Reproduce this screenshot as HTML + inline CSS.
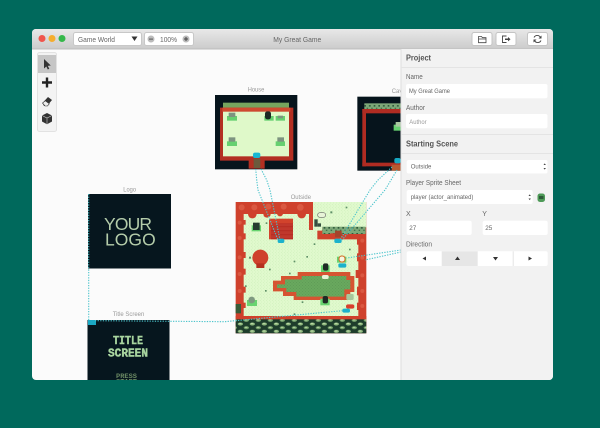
<!DOCTYPE html>
<html><head><meta charset="utf-8"><style>
html,body{margin:0;padding:0;width:600px;height:428px;overflow:hidden;background:#00695c}
svg{position:absolute;left:0;top:0;display:block;filter:blur(.3px)}
text{font-family:"Liberation Sans",sans-serif}
</style></head><body>
<svg width="600" height="428" viewBox="0 0 600 428">
<defs>
<linearGradient id="tb" x1="0" y1="0" x2="0" y2="1"><stop offset="0" stop-color="#e8e8e8"/><stop offset="1" stop-color="#cbcbcb"/></linearGradient>
<pattern id="st" width="9" height="9" patternUnits="userSpaceOnUse"><rect width="9" height="9" fill="#e0f9cd"/><rect x="1" y="2" width="2" height="2" fill="#c8ecb4"/><rect x="6" y="6" width="2" height="2" fill="#c8ecb4"/></pattern>
<pattern id="pd" width="9" height="9" patternUnits="userSpaceOnUse"><rect width="9" height="9" fill="#69a85e"/><rect x="2" y="2" width="2" height="2" fill="#528e4e"/><rect x="6" y="6" width="2" height="2" fill="#528e4e"/></pattern>
<pattern id="tr" width="36" height="22" patternUnits="userSpaceOnUse"><rect width="36" height="22" fill="#1e3d2c"/><ellipse cx="10" cy="6" rx="8" ry="4.500" fill="#8fb87e"/><ellipse cx="28" cy="17" rx="8" ry="4.500" fill="#78a56c"/><rect x="6" y="4" width="7" height="2" fill="#d2e8ba"/><rect x="24" y="15" width="7" height="2" fill="#d2e8ba"/></pattern>
<pattern id="bs" width="14" height="18" patternUnits="userSpaceOnUse"><rect width="14" height="18" fill="#7da878"/><rect x="2" y="3" width="5" height="5" fill="#2f5a3c"/><rect x="9" y="11" width="4" height="4" fill="#3b6a48"/></pattern>
<pattern id="ri" width="10" height="4" patternUnits="userSpaceOnUse"><rect width="10" height="4" fill="#b52c22"/><rect width="10" height="1" y="3" fill="#d65040"/></pattern>
</defs>
<rect width="600" height="428" fill="#00695c"/>
<rect x="32" y="29" width="521" height="351" rx="4" fill="#fbfbfb"/>
<path d="M32 49V33a4 4 0 0 1 4-4h513a4 4 0 0 1 4 4v16z" fill="url(#tb)"/>
<rect x="32" y="48.500" width="521" height="1" fill="#bdbdbd"/>
<circle cx="42" cy="38.500" r="3.500" fill="#f0554c"/><circle cx="52" cy="38.500" r="3.500" fill="#f5ad2e"/><circle cx="62" cy="38.500" r="3.500" fill="#35b84a"/>
<rect x="73.500" y="32.500" width="68" height="13" rx="2" fill="#fff" stroke="#c8c8c8"/>
<text x="78" y="42" font-size="7.500" fill="#666" textLength="37" lengthAdjust="spacingAndGlyphs">Game World</text>
<path d="M131.500 36.500h6l-3 4.500z" fill="#333"/>
<rect x="144.500" y="32.500" width="49" height="13" rx="2" fill="#fff" stroke="#c8c8c8"/>
<circle cx="151" cy="39" r="3.500" fill="#bbb"/><rect x="149" y="38.600" width="4" height="1" fill="#555"/>
<text x="160" y="42" font-size="7.500" fill="#666" textLength="17" lengthAdjust="spacingAndGlyphs">100%</text>
<circle cx="186" cy="39" r="3.500" fill="#bbb"/><path d="M184 39h4M186 37v4" stroke="#444" stroke-width="1"/>
<text x="273.300" y="42" font-size="7.500" fill="#666" textLength="48" lengthAdjust="spacingAndGlyphs">My Great Game</text>
<rect x="472" y="32.500" width="20" height="13" rx="2" fill="#fff" stroke="#c4c4c4"/>
<path d="M478.500 36.500h3l1 1.200h3.500v5h-7.500zM478.500 39h7.500" fill="none" stroke="#444" stroke-width=".8"/>
<rect x="496" y="32.500" width="20" height="13" rx="2" fill="#fff" stroke="#c4c4c4"/>
<path d="M506.500 36h-4v6.500h4" fill="none" stroke="#444" stroke-width=".9"/><path d="M505 38.500h3v-1.500l2.500 2.200-2.500 2.200v-1.400h-3z" fill="#444"/>
<rect x="527.500" y="32.500" width="20" height="13" rx="2" fill="#fff" stroke="#c4c4c4"/>
<path d="M534 37.500a3.600 3.600 0 0 1 6.500 0M541 40.500a3.600 3.600 0 0 1-6.500 0" fill="none" stroke="#444" stroke-width=".9"/><path d="M541.500 35.500v3h-3zM533.500 42.500v-3h3z" fill="#444"/>

<!-- House -->
<text x="247.700" y="91.700" font-size="6" fill="#999" textLength="16.600" lengthAdjust="spacingAndGlyphs">House</text>
<g transform="translate(205 80) scale(.33333)">
<rect x="30" y="45" width="247" height="223" fill="#06141c"/>
<rect x="54" y="68" width="198" height="16" fill="#76a45e"/>
<path d="M45 83H265V242H179V266H131V242H45z" fill="#b32f22"/>
<rect x="52" y="83" width="204" height="12" fill="#cf4a30"/>
<rect x="54" y="95" width="198" height="134" fill="#dff9c9"/>
<g fill="#66d070"><rect x="66" y="108" width="30" height="14"/><rect x="178" y="108" width="28" height="14"/><rect x="212" y="108" width="28" height="14"/><rect x="66" y="184" width="30" height="14"/><rect x="212" y="184" width="28" height="14"/></g>
<g fill="#7d9480"><rect x="71" y="98" width="20" height="13"/><rect x="217" y="172" width="20" height="13"/><rect x="71" y="172" width="20" height="13"/><rect x="218" y="107" width="16" height="8"/></g>
<rect x="180" y="94" width="18" height="24" rx="7" fill="#1c2a24"/>
<rect x="144" y="218" width="22" height="16" rx="6" fill="#16b8d2"/>
<rect x="146" y="236" width="20" height="28" fill="#6b5a3c"/>
</g>

<!-- Cave -->
<text x="391.700" y="93" font-size="6" fill="#999">Cave</text>
<g transform="translate(205 80) scale(.33333)">
<rect x="457" y="50" width="130" height="222" fill="#06141c"/>
<rect x="478" y="70" width="109" height="18" fill="url(#bs)"/>
<rect x="472" y="87" width="115" height="13" fill="#b02c22"/>
<rect x="472" y="87" width="11" height="172" fill="#b02c22"/>
<rect x="472" y="248" width="115" height="11" fill="#b02c22"/>
<rect x="560" y="254" width="27" height="18" fill="#b65a30"/>
<rect x="566" y="134" width="21" height="18" fill="#66d070"/>
<rect x="572" y="126" width="15" height="14" fill="#a8c8a0"/>
<rect x="568" y="234" width="19" height="16" rx="6" fill="#16a8c2"/>
</g>

<!-- Logo -->
<text x="123.300" y="191.300" font-size="6" fill="#999" textLength="12.700" lengthAdjust="spacingAndGlyphs">Logo</text>
<rect x="88" y="194" width="83" height="74.500" fill="#06161e"/>
<text x="104" y="230" font-size="17.500" fill="#b4ccaa" textLength="48" lengthAdjust="spacing">YOUR</text>
<text x="105" y="245.700" font-size="17.500" fill="#b4ccaa" textLength="50.700" lengthAdjust="spacing">LOGO</text>

<!-- Title -->
<text x="112.700" y="316" font-size="6" fill="#999" textLength="31.600" lengthAdjust="spacingAndGlyphs">Title Screen</text>
<rect x="87.500" y="320" width="82" height="60" fill="#06161e"/>
<rect x="88" y="320" width="8" height="5" fill="#1ba9c4"/>
<text x="113" y="344" font-size="12" font-weight="bold" fill="#a9d6a0" stroke="#a9d6a0" stroke-width=".4" style="font-family:'Liberation Mono',monospace" textLength="30" lengthAdjust="spacingAndGlyphs">TITLE</text>
<text x="108" y="356.700" font-size="12" font-weight="bold" fill="#a9d6a0" stroke="#a9d6a0" stroke-width=".4" style="font-family:'Liberation Mono',monospace" textLength="40" lengthAdjust="spacingAndGlyphs">SCREEN</text>
<text x="116" y="378" font-size="6" font-weight="bold" fill="#6b8a64" style="font-family:'Liberation Mono',monospace" textLength="21" lengthAdjust="spacingAndGlyphs">PRESS</text>
<text x="116" y="383.500" font-size="6" font-weight="bold" fill="#6b8a64" style="font-family:'Liberation Mono',monospace" textLength="21" lengthAdjust="spacingAndGlyphs">START</text>
<rect x="0" y="380" width="600" height="48" fill="#00695c"/>

<!-- Outside -->
<text x="290.700" y="199" font-size="6" fill="#999" textLength="20.300" lengthAdjust="spacingAndGlyphs">Outside</text>
<g transform="translate(225 190) scale(.33333)">
<rect x="32" y="36" width="392" height="394" fill="#cf412c"/>
<path d="M264 36H424V112H292V122H264z" fill="url(#st)"/>
<path d="M56 72H252V120H277V148H400V378H56z" fill="url(#st)"/>
<!-- tree scallops -->
<g fill="#cf412c">
<circle cx="82" cy="72" r="13"/><circle cx="126" cy="72" r="11"/><circle cx="230" cy="72" r="13"/><circle cx="165" cy="70" r="9"/>
<rect x="54" y="90" width="8" height="14"/><rect x="54" y="130" width="8" height="18"/><rect x="54" y="186" width="8" height="18"/><rect x="54" y="236" width="8" height="18"/><rect x="54" y="290" width="8" height="18"/><rect x="54" y="338" width="8" height="16"/>
<rect x="396" y="140" width="8" height="24"/><rect x="396" y="190" width="6" height="24"/><rect x="392" y="240" width="10" height="24"/><rect x="396" y="290" width="6" height="26"/><rect x="396" y="338" width="6" height="22"/>
</g>
<g fill="#de6048" opacity=".75">
<circle cx="50" cy="52" r="9"/><circle cx="88" cy="52" r="9"/><circle cx="130" cy="50" r="9"/><circle cx="176" cy="50" r="9"/><circle cx="226" cy="52" r="10"/>
<circle cx="44" cy="98" r="6"/><circle cx="44" cy="144" r="6"/><circle cx="44" cy="202" r="6"/><circle cx="44" cy="252" r="6"/><circle cx="44" cy="303" r="6"/>
<circle cx="412" cy="152" r="6"/><circle cx="412" cy="203" r="6"/><circle cx="412" cy="256" r="6"/><circle cx="412" cy="303" r="6"/><circle cx="412" cy="348" r="6"/>
</g>
<rect x="132" y="86" width="72" height="62" fill="#d2432c"/>
<rect x="138" y="100" width="66" height="48" fill="url(#ri)"/>
<rect x="292" y="110" width="130" height="22" fill="url(#bs)"/>
<rect x="316" y="130" width="36" height="14" fill="#cf412c"/>
<rect x="330" y="122" width="20" height="20" fill="#a3442c"/>
<circle cx="106" cy="203" r="24" fill="#cf412c"/><rect x="94" y="220" width="24" height="14" fill="#b5301f"/>
<path d="M144 272H168V258H218V246H376V258H388V306H376V330H206V318H174V304H144z" fill="#d65432"/>
<path d="M156 283H180V268H230V258H364V270H376V298H358V320H214V306H184V294H156z" fill="url(#pd)"/>
<g fill="#68d470"><rect x="80" y="106" width="28" height="18"/><rect x="288" y="226" width="26" height="20"/><rect x="286" y="326" width="28" height="20"/><rect x="66" y="330" width="30" height="18"/><rect x="336" y="200" width="28" height="18"/></g>
<rect x="84" y="98" width="20" height="22" fill="#263b30"/>
<rect x="294" y="220" width="16" height="22" rx="6" fill="#1e2a24"/>
<rect x="293" y="318" width="16" height="22" rx="6" fill="#1e2a24"/>
<circle cx="80" cy="330" r="10" fill="#7f9a80"/>
<rect x="342" y="198" width="18" height="18" rx="8" fill="#f6f6e0" stroke="#d56a20" stroke-width="3"/>
<rect x="291" y="255" width="20" height="12" rx="5" fill="#e8f4d8"/>
<rect x="278" y="68" width="24" height="14" rx="7" fill="#e8f4d8" stroke="#666" stroke-width="2"/>
<rect x="268" y="88" width="10" height="22" fill="#355040"/><rect x="278" y="100" width="10" height="10" fill="#355040"/>
<rect x="364" y="312" width="22" height="18" rx="4" fill="#a8c89c"/>
<rect x="363" y="343" width="25" height="13" rx="6" fill="#d8402c"/>
<g fill="#1cb2cc"><rect x="158" y="146" width="20" height="13" rx="5"/><rect x="328" y="146" width="22" height="13" rx="5"/><rect x="340" y="220" width="24" height="13" rx="5"/><rect x="352" y="356" width="23" height="12" rx="5"/></g>
<rect x="32" y="342" width="16" height="28" fill="#385c38"/>
<g fill="#5f9068"><rect x="122" y="97" width="5" height="5"/><rect x="316" y="64" width="6" height="6"/><rect x="362" y="50" width="5" height="5"/><rect x="72" y="200" width="6" height="6"/><rect x="206" y="212" width="5" height="5"/><rect x="244" y="198" width="5" height="5"/><rect x="266" y="160" width="5" height="5"/><rect x="132" y="236" width="5" height="5"/><rect x="192" y="248" width="5" height="5"/><rect x="120" y="300" width="5" height="5"/><rect x="230" y="334" width="5" height="5"/><rect x="206" y="370" width="5" height="5"/><rect x="372" y="176" width="5" height="5"/><rect x="60" y="286" width="5" height="5"/></g>
<rect x="32" y="378" width="392" height="14" fill="#cf412c"/>
<rect x="32" y="388" width="392" height="42" fill="url(#tr)"/>
</g>

<!-- connections -->
<g fill="none" stroke="#4cc4cc" stroke-width="1.100" stroke-dasharray="1.300 1.300">
<path d="M255.700 169L256.700 180L258 190L278 240"/>
<path d="M261 169L266.700 180L270 190L280 240"/>
<path d="M392 167L378 180L370 190L340 240"/>
<path d="M397 170L385 190L342 240"/>
<path d="M401 250L346.700 258"/>
<path d="M401 252L365 260"/>
<path d="M88.700 194V320"/>
<path d="M95 320.700L225 321.700L342.300 310.700"/>
</g>

<!-- Toolbar -->
<rect x="37.500" y="52.500" width="19" height="79" rx="2" fill="#f3f3f3" stroke="#e2e2e2"/>
<rect x="38" y="55" width="18" height="18" fill="#c6c6c6"/>
<path d="M44 59v9.500l2.300-2 1.500 3 1.500-.8-1.500-2.800 3-.4z" fill="#333"/>
<path d="M47 77.500v10M42 82.500h10" stroke="#222" stroke-width="2.400"/>
<path d="M42.500 103l5.500-6 4 3-5 6h-3z" fill="#333"/><path d="M42.500 103l2.500 3h2.500l1.800-2.200-4-3z" fill="#eee" stroke="#333" stroke-width=".6"/>
<path d="M47 113l5 2.500v6l-5 2.700-5-2.700v-6z" fill="#333"/><path d="M42 115.500l5 2.500 5-2.500M47 118v6" stroke="#ccc" stroke-width=".6" fill="none"/>

<!-- Sidebar -->
<path d="M401 49H553V376a4 4 0 0 1-4 4H401z" fill="#f2f2f2"/>
<rect x="400.500" y="49" width="1" height="331" fill="#dedede"/>
<rect x="401" y="67" width="152" height="1" fill="#e4e4e4"/>
<text x="406" y="60.700" font-size="8" font-weight="bold" fill="#555" textLength="25" lengthAdjust="spacingAndGlyphs">Project</text>
<text x="406" y="79" font-size="7" fill="#666" textLength="16.700" lengthAdjust="spacingAndGlyphs">Name</text>
<rect x="406" y="84" width="141.500" height="14.300" rx="2" fill="#fff"/>
<text x="409" y="93" font-size="6.300" fill="#666" textLength="41" lengthAdjust="spacingAndGlyphs">My Great Game</text>
<text x="406" y="110" font-size="7" fill="#666" textLength="19" lengthAdjust="spacingAndGlyphs">Author</text>
<rect x="406" y="114" width="141.500" height="14.300" rx="2" fill="#fff"/>
<text x="409.300" y="124" font-size="6.300" fill="#999" textLength="17.300" lengthAdjust="spacingAndGlyphs">Author</text>
<rect x="401" y="134" width="152" height="1" fill="#e4e4e4"/>
<text x="406" y="146.700" font-size="8" font-weight="bold" fill="#555" textLength="52" lengthAdjust="spacingAndGlyphs">Starting Scene</text>
<rect x="401" y="153" width="152" height="1" fill="#e4e4e4"/>
<rect x="406.700" y="160" width="140.800" height="13.500" rx="2" fill="#fff"/>
<text x="410.700" y="168.700" font-size="6.300" fill="#666" textLength="20.700" lengthAdjust="spacingAndGlyphs">Outside</text>
<path d="M543.500 165l1.200-1.600 1.200 1.600zM543.500 168l1.200 1.600 1.200-1.600z" fill="#444"/>
<text x="406" y="185" font-size="7" fill="#666" textLength="55" lengthAdjust="spacingAndGlyphs">Player Sprite Sheet</text>
<rect x="406.700" y="190" width="126" height="14" rx="2" fill="#fff"/>
<text x="410.700" y="199" font-size="6.300" fill="#666" textLength="62.700" lengthAdjust="spacingAndGlyphs">player (actor_animated)</text>
<path d="M528.500 196l1.200-1.600 1.200 1.600zM528.500 198.500l1.200 1.600 1.200-1.600z" fill="#444"/>
<rect x="537.500" y="193.500" width="7.500" height="8.500" rx="2.500" fill="#4e9a58"/><rect x="539" y="196" width="4.500" height="3" fill="#2d5a38"/>
<text x="406" y="216" font-size="7" fill="#666">X</text>
<text x="482.300" y="216" font-size="7" fill="#666">Y</text>
<rect x="406.700" y="220.700" width="65" height="14.300" rx="2" fill="#fff"/>
<rect x="482.700" y="220.700" width="65" height="14.300" rx="2" fill="#fff"/>
<text x="409.300" y="230" font-size="6.300" fill="#666">27</text>
<text x="485.300" y="230" font-size="6.300" fill="#666">25</text>
<text x="406" y="246.700" font-size="7" fill="#666" textLength="26" lengthAdjust="spacingAndGlyphs">Direction</text>
<rect x="406.700" y="251.300" width="141" height="14.700" rx="2" fill="#fff"/>
<rect x="441.700" y="251.300" width="36" height="14.700" fill="#e6e6e6"/>
<rect x="512.700" y="251.300" width="1" height="14.700" fill="#e4e4e4"/>
<path d="M426 256.500v4l-3.500-2zM457.500 256.500l2.500 3.500h-5zM493 257h5l-2.500 3.500zM528.500 256.500v4l3.500-2z" fill="#333"/>
</svg>
</body></html>
